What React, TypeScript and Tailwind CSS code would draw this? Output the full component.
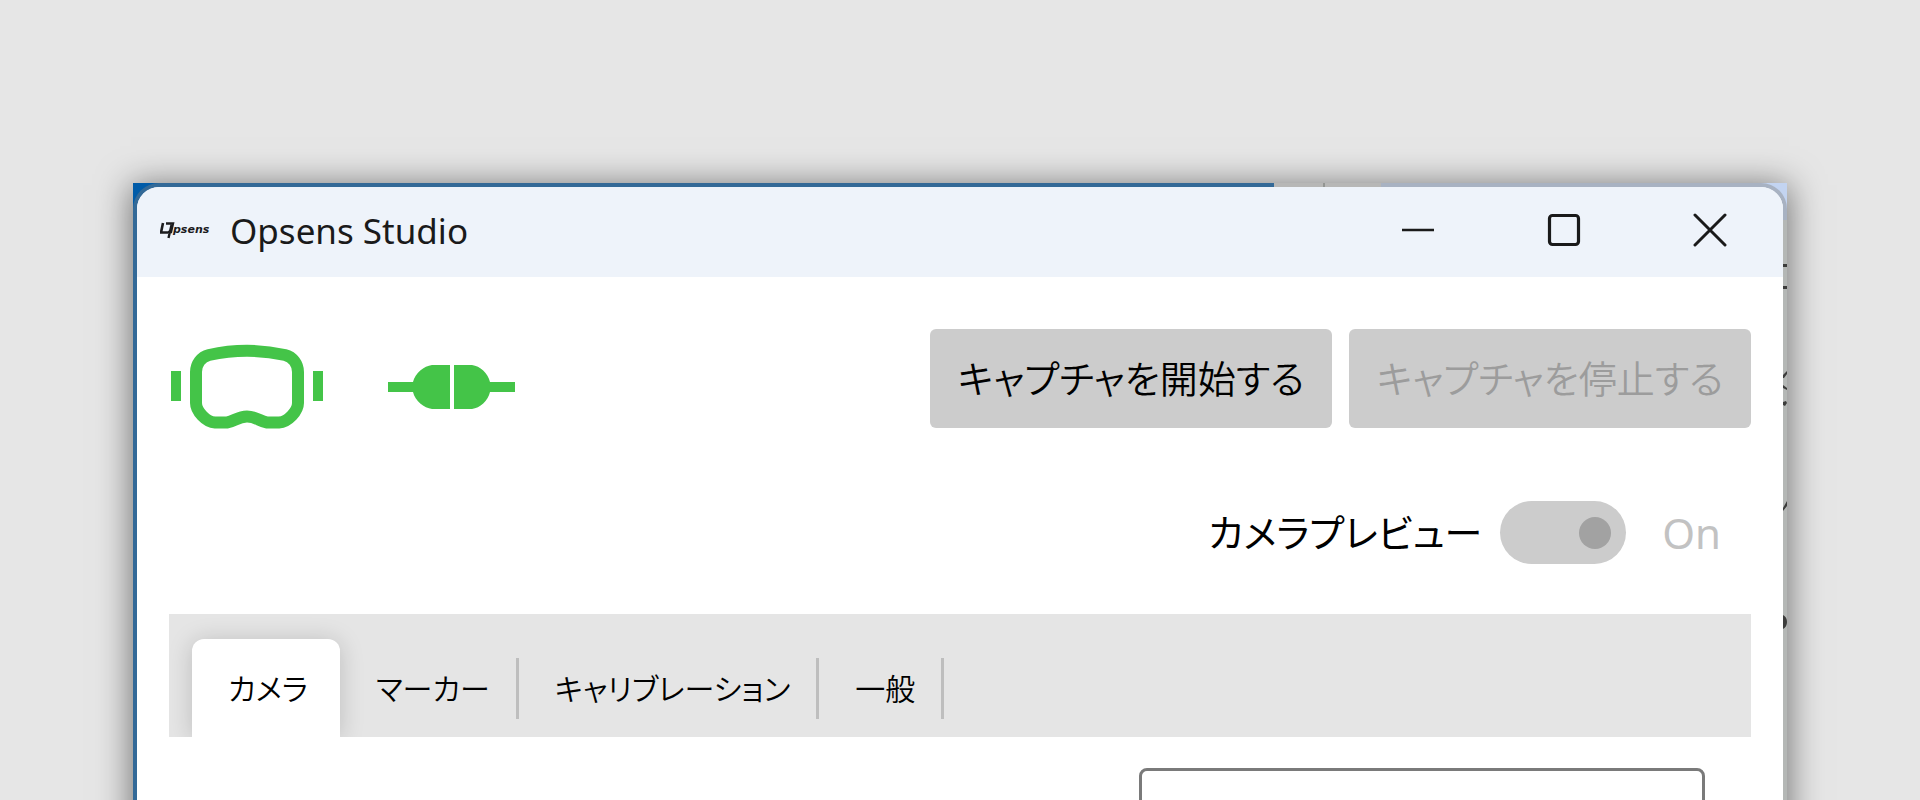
import React, { useState } from "react";

const tabs = ["カメラ", "マーカー", "キャリブレーション", "一般"];

function Logo() {
  return (
    <svg width="52" height="24" viewBox="0 0 52 24" role="img" aria-label="Opsens" fill="#1c1c1e">
      <path d="M3 5L1 14.500H8" fill="none" stroke="#1c1c1e" strokeWidth="2.600" />
      <path d="M6 5.500H13L11 14H8M11.500 7L8.500 20" fill="none" stroke="#1c1c1e" strokeWidth="2.400" />
      <text
        x="13"
        y="15"
        fontSize="11"
        fontFamily="DejaVu Sans, sans-serif"
        fontWeight="700"
        fontStyle="italic"
      >
        psens
      </text>
    </svg>
  );
}

function HeadsetIcon() {
  return (
    <svg width="152" height="86" viewBox="0 0 152 86" role="img" aria-label="Headset" fill="none">
      <path
        d="M38 11Q76 2.500 114 11C122 13 127 20 127 28V59C127 67 117 78 108 78.500H96C89 77.500 85 72.500 76 72.500C67 72.500 63 77.500 56 78.500H44C35 78 25 67 25 59V28C25 20 30 13 38 11Z"
        stroke="#44c448"
        strokeWidth="12"
        strokeLinejoin="round"
      />
      <path d="M0 27h10v30H0zM142 27h10v30h-10z" fill="#44c448" />
    </svg>
  );
}

function PlugIcon() {
  return (
    <svg width="128" height="44" viewBox="0 0 128 44" role="img" aria-label="Connected" fill="#44c448">
      <path d="M0 17H25C27 8 36 1 44 0H62V44H44C36 43 27 36 25 27H0Z" />
      <path d="M66 0H84C92 1 100 8 102 17H127V27H102C100 36 92 43 84 44H66Z" />
    </svg>
  );
}

function Backdrop() {
  return (
    <div aria-hidden="true" className="absolute inset-0 flex">
      <div className="w-[69%] bg-[#005ba8]" />
      <div className="flex grow flex-col bg-[#d8dcdb]">
        <div className="flex h-[37px]">
          <div className="w-[49px] bg-[#dcdcdc]" />
          <div className="w-[2px] bg-[#a0a4a0]" />
          <div className="w-[56px] bg-[#dcdcdc]" />
          <div className="grow bg-[#c3d4f1]" />
        </div>
      </div>
      <svg className="absolute top-0 right-0" width="4" height="460" viewBox="0 0 4 460" fill="#101010">
        <path d="M0 81h4v3H0zM0 103h4v3H0zM0 192l4-4v3l-3 4H0zM0 202l4 3v2l-4-2zM0 219l3-1 1 2-2 3-2-1zM0 325l4-7v5l-4 5zM0 432q4 2 4 7t-4 7z" />
      </svg>
    </div>
  );
}

export default function App() {
  const [active, setActive] = useState(0);
  return (
    <div className="flex h-screen flex-col overflow-hidden bg-[#e6e6e6] px-[133px] pt-[183px] font-['Noto_Sans_CJK_JP',sans-serif] text-black">
      <div className="relative shrink-0 px-1 pt-1 shadow-[0_4px_32px_2px_rgba(0,0,0,0.5)]">
        <Backdrop />
        <div className="relative overflow-hidden rounded-t-[22px] bg-white shadow-[0_0_0_4px_rgba(128,128,124,0.4)]">
          <header className="flex h-[90px] items-center bg-[#eef3fa] pb-1 pl-[23px]">
            <Logo />
            <h1 className="ml-[18px] grow font-['Noto_Sans','Noto_Sans_CJK_JP',sans-serif] text-[35px] leading-none text-[#1a1a1a]">
              Opsens Studio
            </h1>
            <button type="button" aria-label="Minimize" className="flex h-full w-[146px] items-center justify-center">
              <svg width="34" height="34" viewBox="0 0 34 34" fill="none" stroke="#1a1a1a" strokeWidth="2.500">
                <path d="M1 17h32" />
              </svg>
            </button>
            <button type="button" aria-label="Maximize" className="flex h-full w-[146px] items-center justify-center">
              <svg width="34" height="34" viewBox="0 0 34 34" fill="none" stroke="#1a1a1a" strokeWidth="3.200">
                <rect x="2.500" y="2.500" width="29" height="29" rx="3" />
              </svg>
            </button>
            <button type="button" aria-label="Close" className="flex h-full w-[146px] items-center justify-center">
              <svg width="34" height="34" viewBox="0 0 34 34" fill="none" stroke="#1a1a1a" strokeWidth="3" strokeLinecap="round">
                <path d="M2 2l30 30M32 2L2 32" />
              </svg>
            </button>
          </header>

          <main className="px-8 pt-[52px]">
            <div className="flex items-start">
              <div className="flex grow items-center gap-[65px] pt-[15px] pl-[2px]">
                <HeadsetIcon />
                <PlugIcon />
              </div>
              <div className="flex gap-[17px] text-[38px] leading-none">
                <button type="button" className="h-[99px] w-[402px] rounded-[6px] bg-[#cccccc] pb-[3px] font-[350] [font-feature-settings:'palt']">
                  キャプチャを開始する
                </button>
                <button type="button" disabled className="h-[99px] w-[402px] rounded-[6px] bg-[#cccccc] pb-[3px] font-[350] text-[#9c9c9c] [font-feature-settings:'palt']">
                  キャプチャを停止する
                </button>
              </div>
            </div>

            <div className="mt-[71px] flex h-[63px] items-center justify-end pr-[30px]">
              <label htmlFor="preview" className="pb-1 text-[38px] leading-none [font-feature-settings:'palt']">
                カメラプレビュー
              </label>
              <input
                id="preview"
                type="checkbox"
                role="switch"
                defaultChecked
                disabled
                className="ml-[18px] flex h-[63px] w-[126px] appearance-none items-center rounded-full bg-[#cccccc] pl-[79px] before:size-8 before:rounded-full before:bg-[#a2a2a2]"
              />
              <span className="ml-9 font-['Noto_Sans',sans-serif] text-[42px] leading-none text-[#c2c2c2]">On</span>
            </div>

            <div role="tablist" className="mt-[50px] flex h-[123px] items-end overflow-hidden bg-[#e5e5e5] pl-[23px]">
              {tabs.map((tab, i) => (
                <div key={tab} className="flex h-[98px] items-center">
                  <button
                    type="button"
                    role="tab"
                    aria-selected={active === i}
                    onClick={() => setActive(i)}
                    className={
                      "h-full pb-[3px] pl-9 text-[30px] leading-none font-[350] [font-feature-settings:'palt'] " +
                      (active === i ? "rounded-t-[12px] bg-white pr-8 shadow-[0_2px_24px_rgba(0,0,0,0.18)]" : "pr-[26px]")
                    }
                  >
                    {tab}
                  </button>
                  {active !== i && <span className="h-[61px] w-[3px] bg-[#bebebe]" />}
                </div>
              ))}
            </div>

            <div className="flex justify-end pt-[31px] pr-[46px] pb-16">
              <select aria-label="カメラ" className="h-20 w-[566px] appearance-none rounded-[8px] border-3 border-[#7a7a7a] bg-white" />
            </div>
          </main>
        </div>
      </div>
    </div>
  );
}
